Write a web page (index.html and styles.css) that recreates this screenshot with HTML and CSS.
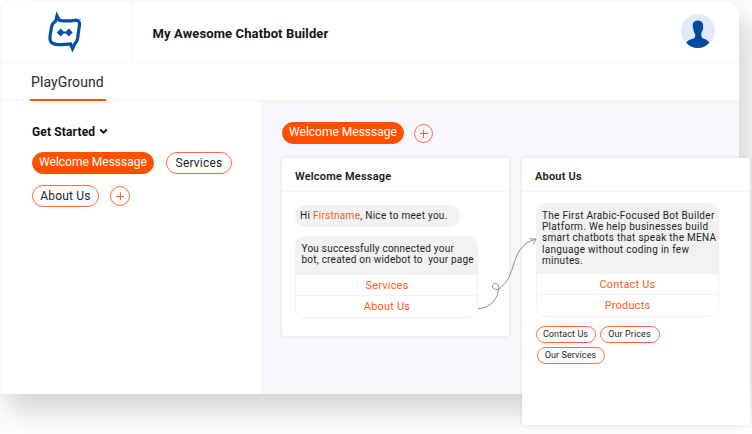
FILE: index.html
```html
<!DOCTYPE html>
<html lang="en">
<head>
<meta charset="utf-8">
<title>My Awesome Chatbot Builder</title>
<link rel="stylesheet" href="styles.css">
</head>
<body>
<div class="window">
  <header class="header">
    <div class="brand">
      <svg class="logo" width="36" height="42" viewBox="0 0 36 42">
        <path d="M10 4.800 L12.400 9.300 Q20 10.600 27.500 9.300 C31.500 8.800 32.900 10.500 32.400 14.500 L30.600 27.500 Q30 31 27.700 33 L25.500 37.600 L23.500 32.900 Q16 34 9 33.300 C4.200 32.800 2.400 30.500 3 25.500 L4.500 16 Q5.300 11.800 8.700 10.200 Z" fill="none" stroke="#0650a4" stroke-width="3.200" stroke-linejoin="miter"/>
        <path d="M9.800 21.500 L13.700 17.600 L16.600 20.500 H18.900 L21.800 17.600 L25.700 21.500 L21.800 25.400 L18.900 22.500 H16.600 L13.700 25.400 Z" fill="#0650a4"/>
        <circle cx="33.300" cy="8.600" r=".8" fill="#7fa4cf"/>
      </svg>
    </div>
    <h1 class="title">My Awesome Chatbot Builder</h1>
    <svg class="avatar" width="34" height="34" viewBox="0 0 34 34">
      <circle cx="17" cy="17" r="17" fill="#e1e9fb"/>
      <path d="M11.800 10.500 Q12 6.800 17 6.500 Q22.300 6.800 22.100 12 Q22.500 14.500 21.200 17 L20.300 19.300 Q19.700 23 21.500 24.200 Q26.500 25.400 28.300 28.700 Q23.500 34 17 34 Q10 34 5.200 28.700 Q7.500 25.400 12.500 24.400 Q14.600 23.600 14.200 20.200 Q12.600 18.800 12.500 15.600 Q11.300 13.500 11.800 10.500 Z" fill="#04499d"/>
    </svg>
  </header>
  <nav class="tabs"><a class="tab"><span>PlayGround</span></a></nav>
  <main class="main">
    <aside class="sidebar">
      <h2 class="group"><span>Get Started</span>
        <svg width="9" height="7" viewBox="0 0 9 7"><path d="M1.200 1.500 L4.500 4.700 L7.800 1.500" fill="none" stroke="#111" stroke-width="1.900"/></svg>
      </h2>
      <div class="row">
        <span class="pill active"><span>Welcome Messsage</span></span>
        <span class="pill services"><span>Services</span></span>
      </div>
      <div class="row second">
        <span class="pill about"><span>About Us</span></span>
        <span class="add"></span>
      </div>
    </aside>
    <section class="board">
      <div class="row">
        <span class="pill active"><span>Welcome Messsage</span></span>
        <span class="add"></span>
      </div>
      <div class="cards">
        <article class="card">
          <h3 class="card-title">Welcome Message</h3>
          <div class="card-body">
            <p class="greeting">Hi <b>Firstname</b>, Nice to meet you.</p>
            <div class="bubble">
              <p class="message msg-short">You successfully connected your<br>bot, created on widebot to&nbsp; your page</p>
              <div class="option">Services</div>
              <div class="option">About Us</div>
            </div>
          </div>
          <svg class="link" width="62" height="76" viewBox="0 0 62 76">
            <path d="M1 70.500 C15 70.500 23 57 21.500 48 C20 44 15 45 15.500 49 C17 53 23 52 25 48 C40 37 33 8 58 1.500" fill="none" stroke="#8d8d8d"/>
            <path d="M52.500 .8 L59 1 L56 6.500" fill="none" stroke="#8d8d8d"/>
          </svg>
        </article>
        <article class="card tall">
          <h3 class="card-title">About Us</h3>
          <div class="card-body">
            <div class="bubble">
              <p class="message msg-long">The First Arabic-Focused Bot Builder<br>Platform. We help businesses build<br>smart chatbots that speak the MENA<br>language without coding in few<br>minutes.</p>
              <div class="option">Contact Us</div>
              <div class="option">Products</div>
            </div>
            <div class="replies">
              <span class="reply">Contact Us</span>
              <span class="reply">Our Prices</span>
              <span class="reply wide">Our Services</span>
            </div>
          </div>
        </article>
      </div>
    </section>
  </main>
</div>
</body>
</html>
```
FILE: styles.css
```css
* { box-sizing: border-box; }
html, body { margin: 0; height: 434px; overflow: hidden; }
body {
  background: #fdfdfd;
  color: #1c1c1c;
  font-family: Roboto, "Liberation Sans", sans-serif;
  padding-top: 1px;
}
h1, h2, h3, p { margin: 0; }

.window {
  width: 739px;
  height: 393px;
  background: #fff;
  border-left: 1px solid #f8f8fa;
  border-radius: 14px 14px 0 0;
  box-shadow: 8px 16px 30px rgba(0, 0, 0, .17);
}

.header {
  height: 62px;
  display: flex;
  align-items: center;
  border-bottom: 1px solid #f7f7f9;
}
.brand {
  width: 132px;
  height: 61px;
  border-right: 1px solid #f5f6fa;
  padding: 10px 0 0 46px;
}
.logo { display: block; }
.title { margin-left: 19.5px; font-size: 13px; font-weight: 700; letter-spacing: .12px; color: #151515; padding-top: 3px; }
.avatar { margin: -1px 24px 0 auto; }

.tabs { height: 38px; padding-left: 29px; border-bottom: 1px solid #f5f5f8; }
.tab {
  display: block;
  width: 76px;
  height: 38px;
  padding-left: 1px;
  border-bottom: 2px solid #ff5101;
  font-size: 14px;
  line-height: 39px;
  color: #2a2a2a;
  white-space: nowrap;
  letter-spacing: .1px;
}

.main { display: flex; height: 293px; }
.sidebar { width: 260px; padding: 22px 0 0 31px; flex: none; }
.group { display: flex; align-items: center; gap: 4px; height: 17px; font-size: 12px; font-weight: 700; letter-spacing: .15px; color: #111; }
.group + .row { margin-top: 12px; }

.row { display: flex; align-items: center; height: 22px; }
.row.second { margin-top: 11px; gap: 11px; }
.pill {
  height: 22px;
  display: flex;
  align-items: center;
  justify-content: center;
  border: 1px solid #ff6c35;
  border-radius: 11px;
  font-size: 12px;
  letter-spacing: .2px;
  white-space: nowrap;
  color: #252525;
}
.active { width: 122px; background: #ff5000; border-color: #ff5000; color: #fff; padding-bottom: 2px; letter-spacing: 0; }
.services { width: 66px; margin-left: 12px; }
.about { width: 67px; }
.add {
  width: 20px;
  height: 20px;
  border: 1px solid #ff6c35;
  border-radius: 50%;
  background:
    linear-gradient(#ff6225, #ff6225) center / 8px 1px no-repeat,
    linear-gradient(#ff6225, #ff6225) center / 1px 8px no-repeat;
}

.board { flex: 1; min-width: 0; background: #f7f8fc; padding: 21px 0 0 21px; }
.board .add { width: 19px; height: 19px; margin-left: 10px; margin-top: 1px; }
.cards { display: flex; gap: 13px; margin-top: 14px; align-items: flex-start; }
.card {
  position: relative;
  z-index: 2;
  flex: none;
  width: 227px;
  height: 178px;
  background: #fff;
  border-radius: 2px;
  box-shadow: 0 0 4px rgba(60, 60, 80, .13);
}
.tall { width: 228px; height: 267px; z-index: 1; }
.card-title { height: 34px; line-height: 37px; padding-left: 13px; border-bottom: 1px solid #f5f5f7; font-size: 11px; font-weight: 600; letter-spacing: .2px; color: #181818; }
.card-body { padding: 13px 13px 0; }
.tall .card-body { padding: 11px 13px 0 13.5px; }
.greeting { width: 165px; height: 22px; border-radius: 10px; background: #f2f2f2; padding-left: 5px; font-size: 10px; line-height: 22px; white-space: nowrap; letter-spacing: .28px; }
.greeting b { font-weight: 400; color: #ff5b20; }
.greeting + .bubble { margin-top: 9px; }
.bubble { width: 183px; border: 1px solid #f2f2f2; border-radius: 10px; overflow: hidden; }
.message { background: #f2f2f2; white-space: nowrap; font-size: 10px; line-height: 11.2px; padding-left: 5.5px; letter-spacing: .22px; }
.msg-short { height: 38px; padding-top: 6px; }
.msg-long { height: 70px; padding-top: 6px; letter-spacing: .3px; }
.option { height: 21px; border-bottom: 1px solid #f3f3f3; text-align: center; font-size: 11px; line-height: 22px; color: #ff5b20; letter-spacing: .2px; padding-left: 1px; }
.option:last-child { border: 0; height: 21px; line-height: 21px; }
.link { position: absolute; left: 195px; top: 80px; z-index: 2; }

.replies { display: flex; flex-wrap: wrap; gap: 4px; margin-top: 9px; width: 140px; }
.reply { width: 60px; height: 17px; border: 1px solid #ff6b33; border-radius: 9px; text-align: center; font-size: 9px; line-height: 15px; white-space: nowrap; color: #252525; letter-spacing: .1px; }
.wide { width: 68px; margin-left: 1px; }
```
